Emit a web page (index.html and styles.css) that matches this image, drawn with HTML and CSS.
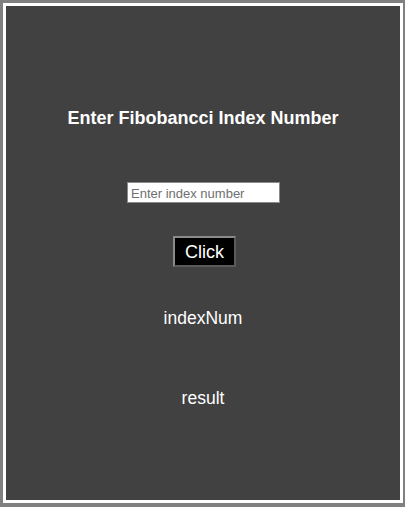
FILE: index.html
```html
<!DOCTYPE html>
<html>
<head>
<meta charset="utf-8">
<link rel="stylesheet" href="styles.css">
</head>
<body>
<main class="app">
  <h1 class="title">Enter Fibobancci Index Number</h1>
  <input class="index-input" type="text" placeholder="Enter index number">
  <button class="click-btn">Click</button>
  <p class="out index-num">indexNum</p>
  <p class="out result">result</p>
</main>
</body>
</html>
```
FILE: styles.css
```css
html, body {
  margin: 0;
  padding: 0;
  background: #808080;
}
body {
  padding: 3px 2px 4px 3px;
  font-family: "Liberation Sans", Arial, sans-serif;
}
.app {
  box-sizing: border-box;
  width: 400px;
  height: 500px;
  border: 3px solid #ffffff;
  background: #414141;
  display: flex;
  flex-direction: column;
  align-items: center;
  padding-top: 102px;
  color: #ffffff;
}
.title {
  margin: 0;
  font-size: 18px;
  line-height: 21px;
  font-weight: bold;
}
.index-input {
  box-sizing: border-box;
  margin-top: 53px;
  margin-left: 1px;
  width: 153px;
  height: 21px;
  border: 1px solid #8a8a8a;
  padding: 2px 3px 1px;
  background: #ffffff;
  font-family: "Liberation Sans", Arial, sans-serif;
  font-size: 13px;
  color: #000;
  outline: none;
}
.index-input::placeholder {
  color: #6f6f6f;
}
.click-btn {
  box-sizing: border-box;
  margin-top: 33px;
  margin-left: 3px;
  width: 63px;
  height: 31px;
  padding: 0;
  background: #000000;
  color: #ffffff;
  border: 2px solid;
  border-color: #8a8a8a #5a5a5a #5a5a5a #8a8a8a;
  font-family: "Liberation Sans", Arial, sans-serif;
  font-size: 18px;
  line-height: 20px;
}
.out {
  margin: 0;
  font-size: 17.5px;
  line-height: 20px;
}
.index-num {
  margin-top: 41px;
}
.result {
  margin-top: 60px;
}
```
